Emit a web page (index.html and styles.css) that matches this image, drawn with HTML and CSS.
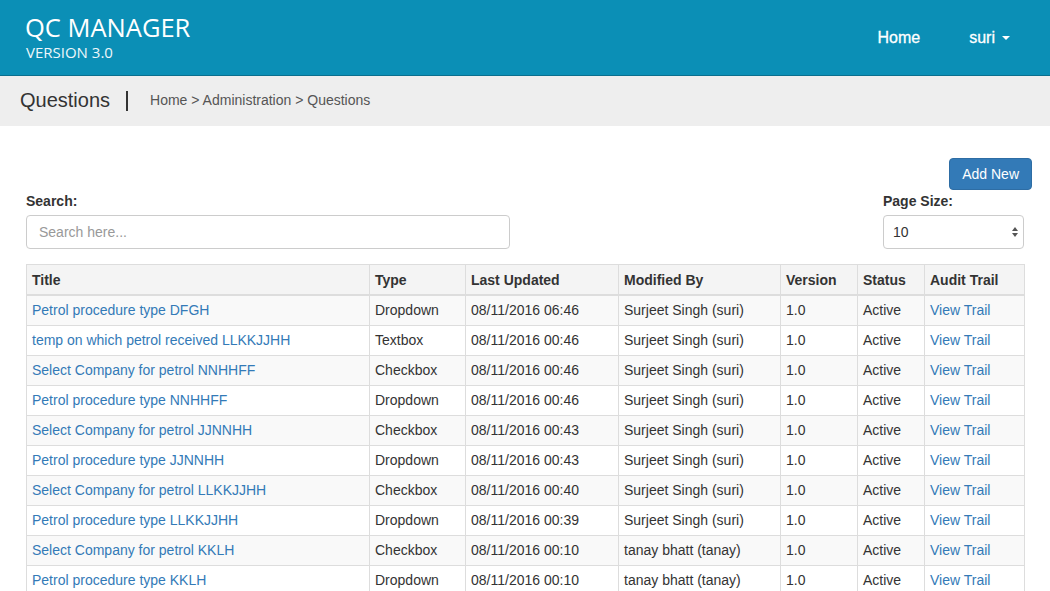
FILE: index.html
```html
<!DOCTYPE html>
<html>
<head>
<meta charset="utf-8">
<link rel="stylesheet" href="styles.css">
</head>
<body>
<header class="topbar">
  <div class="brand">
    <div class="brand-name">QC MANAGER</div>
    <div class="brand-version">VERSION 3.0</div>
  </div>
  <nav class="topnav">
    <a class="nav-link" href="#">Home</a>
    <a class="nav-link user" href="#">suri <span class="caret"></span></a>
  </nav>
</header>
<div class="subbar">
  <h1 class="page-title">Questions</h1>
  <span class="divider"></span>
  <div class="crumbs">Home &gt; Administration &gt; Questions</div>
</div>
<main class="content">
  <div class="actions">
    <button class="btn-primary">Add New</button>
  </div>
  <div class="filters">
    <div class="field search-field">
      <label>Search:</label>
      <input class="input" type="text" placeholder="Search here...">
    </div>
    <div class="field size-field">
      <label>Page Size:</label>
      <div class="select-wrap">
        <select class="input select"><option>10</option></select>
      </div>
    </div>
  </div>
  <table class="grid">
    <colgroup>
      <col class="c-title"><col class="c-type"><col class="c-date"><col class="c-mod"><col class="c-ver"><col class="c-status"><col class="c-audit">
    </colgroup>
    <thead>
      <tr><th>Title</th><th>Type</th><th>Last Updated</th><th>Modified By</th><th>Version</th><th>Status</th><th>Audit Trail</th></tr>
    </thead>
    <tbody>
      <tr><td><a href="#">Petrol procedure type DFGH</a></td><td>Dropdown</td><td>08/11/2016 06:46</td><td>Surjeet Singh (suri)</td><td>1.0</td><td>Active</td><td><a href="#">View Trail</a></td></tr>
      <tr><td><a href="#">temp on which petrol received LLKKJJHH</a></td><td>Textbox</td><td>08/11/2016 00:46</td><td>Surjeet Singh (suri)</td><td>1.0</td><td>Active</td><td><a href="#">View Trail</a></td></tr>
      <tr><td><a href="#">Select Company for petrol NNHHFF</a></td><td>Checkbox</td><td>08/11/2016 00:46</td><td>Surjeet Singh (suri)</td><td>1.0</td><td>Active</td><td><a href="#">View Trail</a></td></tr>
      <tr><td><a href="#">Petrol procedure type NNHHFF</a></td><td>Dropdown</td><td>08/11/2016 00:46</td><td>Surjeet Singh (suri)</td><td>1.0</td><td>Active</td><td><a href="#">View Trail</a></td></tr>
      <tr><td><a href="#">Select Company for petrol JJNNHH</a></td><td>Checkbox</td><td>08/11/2016 00:43</td><td>Surjeet Singh (suri)</td><td>1.0</td><td>Active</td><td><a href="#">View Trail</a></td></tr>
      <tr><td><a href="#">Petrol procedure type JJNNHH</a></td><td>Dropdown</td><td>08/11/2016 00:43</td><td>Surjeet Singh (suri)</td><td>1.0</td><td>Active</td><td><a href="#">View Trail</a></td></tr>
      <tr><td><a href="#">Select Company for petrol LLKKJJHH</a></td><td>Checkbox</td><td>08/11/2016 00:40</td><td>Surjeet Singh (suri)</td><td>1.0</td><td>Active</td><td><a href="#">View Trail</a></td></tr>
      <tr><td><a href="#">Petrol procedure type LLKKJJHH</a></td><td>Dropdown</td><td>08/11/2016 00:39</td><td>Surjeet Singh (suri)</td><td>1.0</td><td>Active</td><td><a href="#">View Trail</a></td></tr>
      <tr><td><a href="#">Select Company for petrol KKLH</a></td><td>Checkbox</td><td>08/11/2016 00:10</td><td>tanay bhatt (tanay)</td><td>1.0</td><td>Active</td><td><a href="#">View Trail</a></td></tr>
      <tr><td><a href="#">Petrol procedure type KKLH</a></td><td>Dropdown</td><td>08/11/2016 00:10</td><td>tanay bhatt (tanay)</td><td>1.0</td><td>Active</td><td><a href="#">View Trail</a></td></tr>
    </tbody>
  </table>
</main>
</body>
</html>
```
FILE: styles.css
```css
* { box-sizing: border-box; }
html, body { margin: 0; padding: 0; }
body {
  font-family: "Liberation Sans", Arial, sans-serif;
  font-size: 14px;
  line-height: 20px;
  color: #333;
  background: #fff;
}
a { color: #337ab7; text-decoration: none; }

.topbar {
  height: 76px;
  background: #0b8fb6;
  border-bottom: 1px solid #0a6f8e;
  display: flex;
  justify-content: space-between;
  align-items: flex-start;
  padding: 0 40px 0 25px;
}
.brand { padding-top: 13px; font-family: "Open Sans", sans-serif; color: #fff; }
.brand-name { font-size: 25.5px; line-height: 28px; }
.brand-version { font-size: 15px; line-height: 18px; margin-top: 2px; margin-left: 1px; color: #eef7fb; }

.topnav { display: flex; align-items: center; height: 75px; }
.nav-link {
  color: #fff;
  font-size: 16px;
  margin-left: 49px;
  -webkit-text-stroke: 0.3px #fff;
}
.nav-link.user { display: flex; align-items: center; }
.caret {
  display: inline-block;
  width: 0; height: 0;
  margin-left: 7px;
  border-top: 4px solid #fff;
  border-left: 4px solid transparent;
  border-right: 4px solid transparent;
}

.subbar {
  height: 50px;
  background: #eeeeee;
  display: flex;
  align-items: center;
  padding: 0 20px;
}
.page-title { margin: 0 0 2px 0; font-size: 20px; font-weight: normal; color: #333; line-height: 24px; }
.divider { width: 2px; height: 20px; background: #333; margin: 0 22px 0 16px; }
.crumbs { color: #555; font-size: 14px; margin-bottom: 2px; }

.content { padding: 32px 26px 0 26px; }
.actions { display: flex; justify-content: flex-end; margin-right: -8px; }
.btn-primary {
  font-family: "Liberation Sans", Arial, sans-serif;
  font-size: 14px;
  line-height: 20px;
  color: #fff;
  background: #337ab7;
  border: 1px solid #2e6da4;
  border-radius: 4px;
  padding: 5px 12px;
  height: 32px;
}

.filters { display: flex; justify-content: space-between; align-items: flex-end; }
.field { display: flex; flex-direction: column; }
.field label { font-weight: bold; margin: 1px 0 4px 0; }
.search-field { width: 484px; }
.size-field { width: 141px; }
.input {
  height: 34px;
  border: 1px solid #ccc;
  border-radius: 4px;
  font-family: "Liberation Sans", Arial, sans-serif;
  font-size: 14px;
  color: #555;
  padding: 6px 12px;
  background: #fff;
  width: 100%;
}
.input::placeholder { color: #999; }
.select-wrap { position: relative; }
.select { appearance: none; -webkit-appearance: none; padding-left: 9px; color: #333; }
.select-wrap::before, .select-wrap::after {
  content: "";
  position: absolute;
  right: 6px;
  width: 0; height: 0;
  border-left: 3px solid transparent;
  border-right: 3px solid transparent;
}
.select-wrap::before { top: 12px; border-bottom: 4px solid #555; }
.select-wrap::after { top: 18px; border-top: 4px solid #555; }

.grid {
  margin-top: 15px;
  width: 998px;
  table-layout: fixed;
  border-collapse: collapse;
  border: 1px solid #ddd;
}
.c-title { width: 343px; }
.c-type { width: 96px; }
.c-date { width: 153px; }
.c-mod { width: 162px; }
.c-ver { width: 77px; }
.c-status { width: 67px; }
.c-audit { width: 100px; }
.grid th, .grid td {
  border: 1px solid #ddd;
  padding: 4px 5px 5px 5px;
  text-align: left;
  white-space: nowrap;
  overflow: hidden;
}
.grid th { background: #f4f4f4; border-bottom: 2px solid #ddd; padding-top: 5px; padding-bottom: 4px; }
.grid tbody tr:nth-child(odd) td { background: #f9f9f9; }
```
